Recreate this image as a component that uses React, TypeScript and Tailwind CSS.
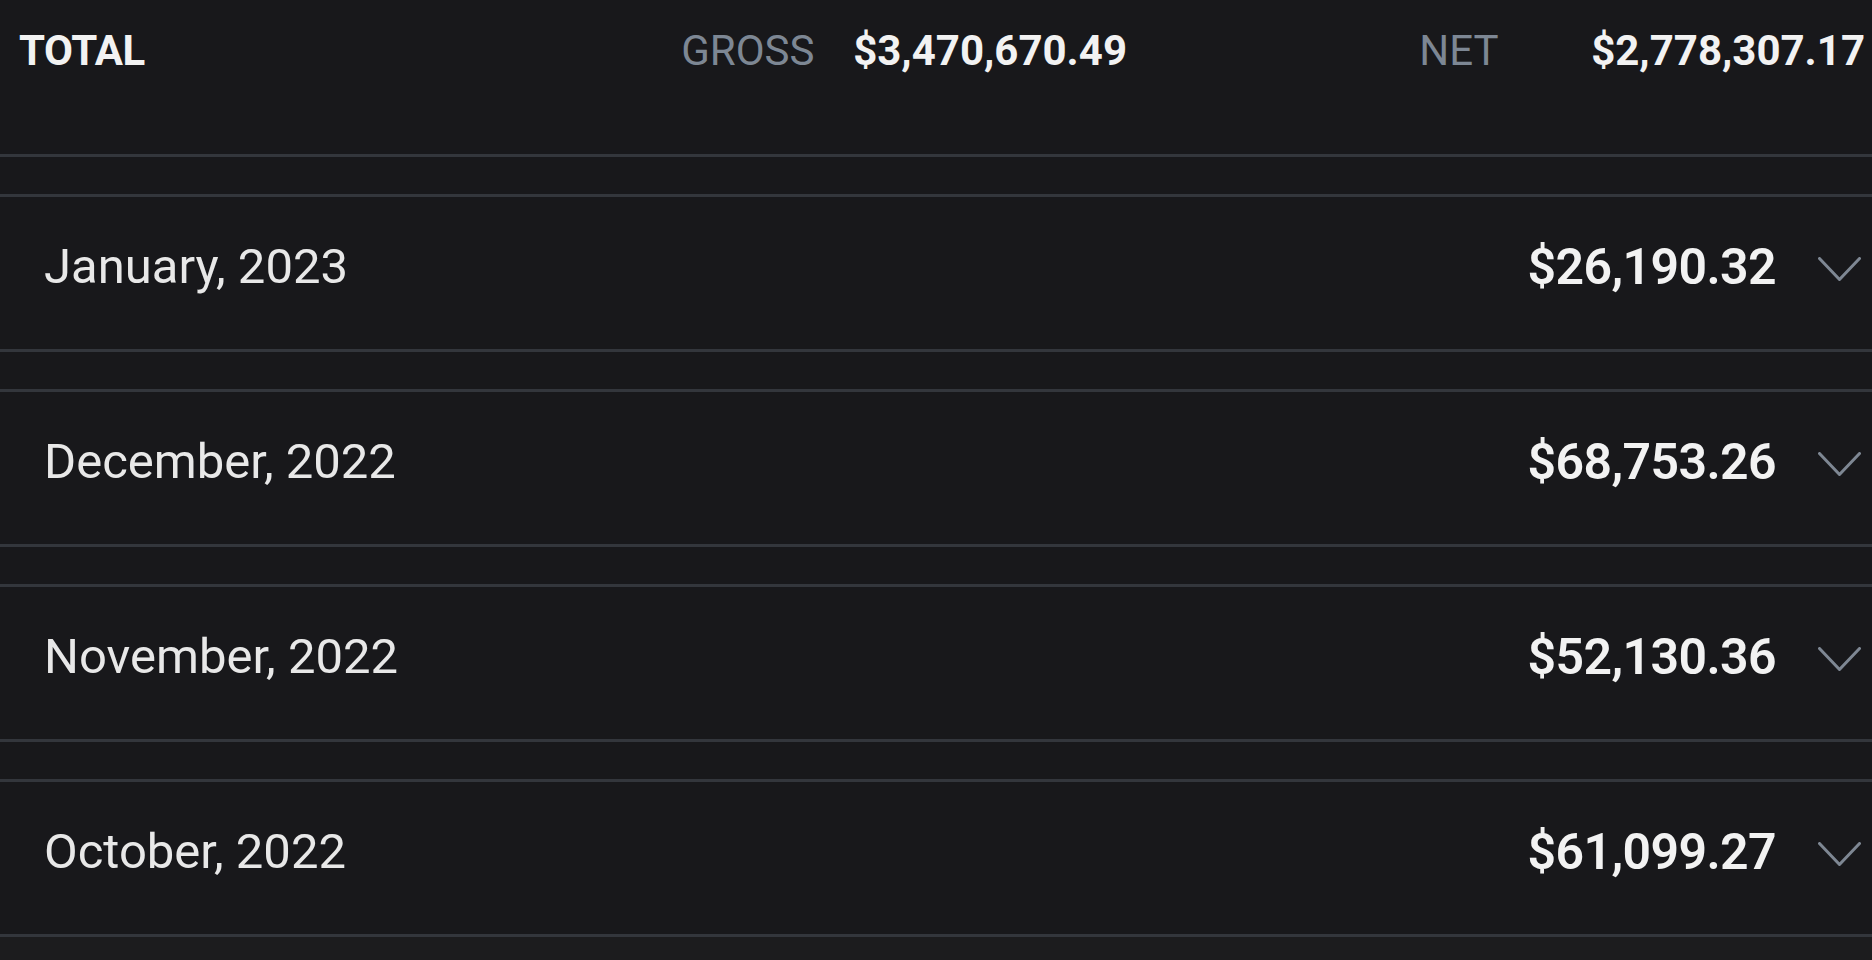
import React from "react";

const months = [
  { label: "January, 2023", amount: "$26,190.32" },
  { label: "December, 2022", amount: "$68,753.26" },
  { label: "November, 2022", amount: "$52,130.36" },
  { label: "October, 2022", amount: "$61,099.27" },
];

function Chevron() {
  return (
    <svg width="43" height="25" viewBox="0 0 43 25" fill="none" className="shrink-0">
      <polyline
        points="1.5,1.5 21.5,22.5 41.5,1.5"
        stroke="#7e8793"
        strokeWidth="3"
        strokeLinecap="round"
        strokeLinejoin="round"
        fill="none"
      />
    </svg>
  );
}

export default function App() {
  return (
    <div
      className="w-[1872px] h-[960px] bg-[#1c1c1e] flex flex-col overflow-hidden"
      style={{ fontFamily: "Roboto, 'Liberation Sans', sans-serif" }}
    >
      <div className="bg-[#18181b]">
        <div className="h-[157px] border-b-[3px] border-[#33363c] flex items-start pt-[22px] pl-[19px] pr-[7px]">
          <div className="flex-1 text-[42px] leading-[58px] font-bold text-[#f2f2f2] tracking-[-0.4px]">TOTAL</div>
          <div className="w-[738px] flex items-start">
            <div className="w-[172px] text-[42px] leading-[58px] text-[#7d8794]">GROSS</div>
            <div className="text-[42px] leading-[58px] font-bold text-[#f2f2f2]">$3,470,670.49</div>
          </div>
          <div className="flex items-start">
            <div className="w-[172px] text-[42px] leading-[58px] text-[#7d8794]">NET</div>
            <div className="text-[42px] leading-[58px] font-bold text-[#f2f2f2]">$2,778,307.17</div>
          </div>
        </div>
        <div className="flex flex-col gap-[37px] pt-[37px]">
          {months.map((m) => (
            <div
              key={m.label}
              className="h-[158px] border-y-[3px] border-[#33363c] flex items-center pl-[44px] pr-[11px] pb-[12px]"
            >
              <div className="flex-1 text-[49px] leading-[64px] text-[#e8e8e8]">{m.label}</div>
              <div className="text-[50px] leading-[64px] font-semibold text-[#f2f2f2] tracking-[-0.6px]">{m.amount}</div>
              <div className="ml-[42px] pt-[4px] flex items-center">
                <Chevron />
              </div>
            </div>
          ))}
        </div>
      </div>
    </div>
  );
}
